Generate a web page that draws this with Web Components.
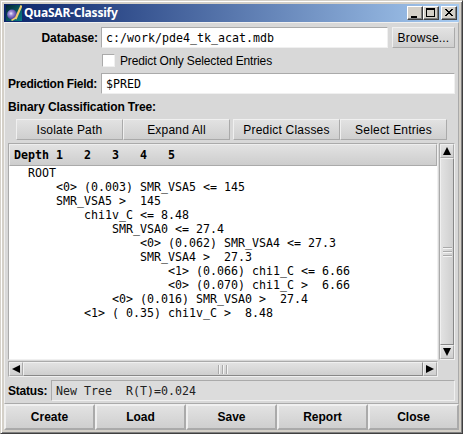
<!DOCTYPE html>
<html lang="en">
<head>
<meta charset="utf-8">
<title>QuaSAR-Classify</title>
<style>
html,body{margin:0;width:463px;height:434px;overflow:hidden;background:#d8d8d8}
body{font:12px "Liberation Sans",Arial,sans-serif;color:#000}
</style>
</head>
<body>
<qs-window></qs-window>
<script>
const define = (name, html, init) => customElements.define(name, class extends HTMLElement {
  constructor() {
    super();
    const t = document.createElement('template');
    t.innerHTML = html;
    this.attachShadow({mode: 'open'}).append(t.content.cloneNode(true));
    if (init) init(this.shadowRoot, this);
  }
});

define('qs-button', `<style>
:host{box-sizing:border-box;display:flex;align-items:center;justify-content:center;white-space:pre;
border:solid;border-width:var(--b,1px);border-color:#f0f0f0 #aaa #aaa #f0f0f0;
background:linear-gradient(#e2e2e2,#cfcfcf);font-size:12px;letter-spacing:.2px}
</style><slot></slot>`);

define('qs-field', `<style>
:host{box-sizing:border-box;display:flex;align-items:center;white-space:pre;height:21px;
border:1px solid;border-color:#aaa #f0f0f0 #f0f0f0 #aaa;background:var(--bg,#fff);
font:11.63px "DejaVu Sans Mono",monospace;padding-left:4px;color:var(--fg,#000)}
</style><slot></slot>`);

define('qs-label', `<style>
:host{display:block;font-weight:bold;font-size:12px;white-space:pre;letter-spacing:var(--ls,-.1px)}
</style><slot></slot>`);

define('qs-titlebar', `<style>
:host{display:flex;height:18px;align-items:center;background:linear-gradient(90deg,#0a246a,#a6caf0);color:#fff}
.logo{width:16px;height:16px;margin:0 2px 0 2px}
b{flex:1;font:bold 12px/18px "Noto Sans","DejaVu Sans",sans-serif;white-space:pre;letter-spacing:-.2px}
.c{box-sizing:border-box;width:16px;height:14px;border:1px solid;border-color:#fff #404040 #404040 #fff;background:#d4d0c8;box-shadow:inset -1px -1px #808080}
.c svg{display:block}
.c:last-child{margin:0 2px}
</style>
<svg class="logo" viewBox="0 0 16 16"><defs>
<linearGradient id="g" x2="1" y2="1"><stop stop-color="#042430"/><stop offset="1" stop-color="#0a8088"/></linearGradient>
<radialGradient id="s" cx=".4" cy=".4"><stop stop-color="#f4f0ff"/><stop offset=".4" stop-color="#a090d8"/><stop offset="1" stop-color="#5a4aa8"/></radialGradient></defs>
<rect width="16" height="16" fill="url(#g)"/><circle cx="6" cy="9.500" r="4.900" fill="url(#s)"/>
<path d="M15.500 .5 9.500 14" fill="none" stroke="#f0cc70" stroke-width="2.200"/><path d="M5.500 15.500 9.500 13" stroke="#f0cc70" stroke-width="1.500"/></svg>
<b><slot></slot></b>
<span class="c"><svg width="14" height="12"><path d="M3 9h6v2H3z"/></svg></span>
<span class="c"><svg width="14" height="12"><path d="M2 1h9v9H2zM3 3v6h7V3z" fill-rule="evenodd"/></svg></span>
<span class="c"><svg width="14" height="12" shape-rendering="crispEdges"><path d="M3 2h2v1h1v1h2V3h1V2h2v1h-1v1H9v1H8v1h1v1h1v1h1v1H9V8H8V7H6v1H5v1H3V8h1V7h1V6h1V5H5V4H4V3H3z"/></svg></span>`);

define('qs-scrollbar', `<style>
:host{box-sizing:border-box;display:flex;border:1px solid;border-color:#aaa #f0f0f0 #f0f0f0 #aaa;background:#e0e0e0;height:16px}
:host([vertical]){flex-direction:column;height:auto;width:16px}
.a{flex:none;width:14px;height:14px;box-sizing:border-box;border:1px solid;border-color:#f0f0f0 #aaa #aaa #f0f0f0;background:linear-gradient(#e2e2e2,#cfcfcf)}
.a svg{display:block}
:host([vertical]) .n svg,:host([vertical]) .f svg{transform:rotate(90deg)}
.t{flex:1;box-sizing:border-box;border:1px solid;border-color:#f0f0f0 #888 #888 #f0f0f0;background:linear-gradient(#e2e2e2,#cfcfcf);display:flex;align-items:center;justify-content:center}
:host([vertical]) .t{background:linear-gradient(90deg,#e2e2e2,#cfcfcf)}
.g{width:10px;height:9px;background:repeating-linear-gradient(90deg,#aaa 0 1px,#f4f4f4 1px 2px,transparent 2px 4px)}
:host([vertical]) .g{width:9px;height:10px;background:repeating-linear-gradient(#aaa 0 1px,#f4f4f4 1px 2px,transparent 2px 4px)}
</style>
<div class="a n"><svg width="12" height="12"><path d="M2 6 10 2v8z"/></svg></div>
<div class="t"><div class="g"></div></div>
<div class="a f"><svg width="12" height="12"><path d="M10 6 2 2v8z"/></svg></div>`);

define('qs-tree', `<style>
:host{box-sizing:border-box;display:block;border:1px solid;border-color:#aaa #f0f0f0 #f0f0f0 #aaa;background:#fff}
header,pre{font:11.63px/14px "DejaVu Sans Mono",monospace;margin:0;white-space:pre}
header{box-sizing:border-box;height:22px;font-weight:bold;line-height:20px;padding-left:4px;background:linear-gradient(#e2e2e2,#cdcdcd);border:1px solid;border-color:#eee #aaa #aaa #eee}
pre{padding-left:5px}
</style><header>Depth 1   2   3   4   5</header><pre></pre>`, root => {
  const rows = [[2,'ROOT'],[6,'<0> (0.003) SMR_VSA5 <= 145'],[6,'SMR_VSA5 >  145'],[10,'chi1v_C <= 8.48'],
    [14,'SMR_VSA0 <= 27.4'],[18,'<0> (0.062) SMR_VSA4 <= 27.3'],[18,'SMR_VSA4 >  27.3'],
    [22,'<1> (0.066) chi1_C <= 6.66'],[22,'<0> (0.070) chi1_C >  6.66'],[14,'<0> (0.016) SMR_VSA0 >  27.4'],[10,'<1> ( 0.35) chi1v_C >  8.48']];
  root.querySelector('pre').textContent = rows.map(([n, s]) => ' '.repeat(n) + s).join('\n');
});

define('qs-window', `<style>
:host{box-sizing:border-box;display:block;width:463px;height:434px;padding:3px 2px 2px 3px;border:1px solid;border-color:#d4d0c8 #404040 #404040 #d4d0c8;background:#d4d0c8;box-shadow:inset 1px 1px #fff,inset -1px -1px #808080}
qs-titlebar{margin-right:1px}
.client{box-sizing:border-box;height:408px;margin-right:1px;background:#d8d8d8;display:flex;flex-direction:column}
.main{box-sizing:border-box;height:382px;border:1px solid;border-color:#f0f0f0 #aaa #aaa #f0f0f0;padding:4px 3px 0 3px}
.row{display:flex;align-items:center}
.db qs-label{width:90px;padding-right:3px;text-align:right}
.db qs-field{width:287px}
.db qs-button{width:63px;height:21px;margin-left:4px}
.check{height:25px;padding-left:94px;letter-spacing:-.14px}
.box{box-sizing:border-box;width:13px;height:13px;border:1px solid;border-color:#aaa #f0f0f0 #f0f0f0 #aaa;background:#fff;margin-right:5px}
.pf qs-label{width:93px;--ls:-.3px}.pf qs-field{flex:1}
.tree-label{height:25px}
.tools{height:21px;padding-left:8px}.tools qs-button{width:107px;height:21px}.tools qs-button:nth-child(3){margin-left:3px}
.view{display:grid;grid-template:217px 16px/430px 16px;gap:1px;margin-top:3px}
.status{margin-top:3px}.status qs-label{width:43px;--ls:-.2px}.status qs-field{flex:1;--bg:#dcdcdc;--fg:#222}
.actions{display:flex;height:26px}.actions qs-button{flex:1;--b:2px;font-weight:bold;letter-spacing:0}
</style>
<qs-titlebar>QuaSAR-Classify</qs-titlebar>
<div class="client"><div class="main">
<div class="row db"><qs-label>Database:</qs-label><qs-field>c:/work/pde4_tk_acat.mdb</qs-field><qs-button>Browse...</qs-button></div>
<div class="row check"><span class="box"></span><span>Predict Only Selected Entries</span></div>
<div class="row pf"><qs-label>Prediction Field:</qs-label><qs-field>$PRED</qs-field></div>
<div class="row tree-label"><qs-label>Binary Classification Tree:</qs-label></div>
<div class="row tools"><qs-button>Isolate Path</qs-button><qs-button>Expand All</qs-button><qs-button>Predict Classes</qs-button><qs-button>Select Entries</qs-button></div>
<div class="view"><qs-tree></qs-tree><qs-scrollbar vertical></qs-scrollbar><qs-scrollbar></qs-scrollbar></div>
<div class="row status"><qs-label>Status:</qs-label><qs-field>New Tree  R(T)=0.024</qs-field></div>
</div>
<div class="actions"><qs-button>Create</qs-button><qs-button>Load</qs-button><qs-button>Save</qs-button><qs-button>Report</qs-button><qs-button>Close</qs-button></div>
</div>`);
</script>
</body>
</html>
